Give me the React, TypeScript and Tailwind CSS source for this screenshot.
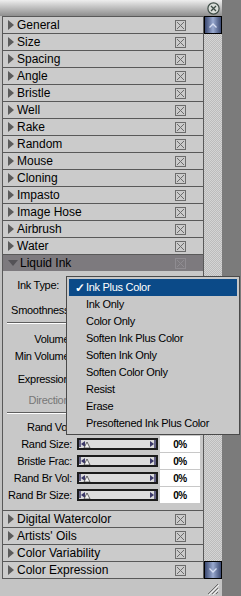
import React from 'react';

const topRows = ['General', 'Size', 'Spacing', 'Angle', 'Bristle', 'Well', 'Rake', 'Random', 'Mouse', 'Cloning', 'Impasto', 'Image Hose', 'Airbrush', 'Water'];
const bottomRows = ['Digital Watercolor', "Artists' Oils", 'Color Variability', 'Color Expression'];
const menuItems = ['Ink Plus Color', 'Ink Only', 'Color Only', 'Soften Ink Plus Color', 'Soften Ink Only', 'Soften Color Only', 'Resist', 'Erase', 'Presoftened Ink Plus Color'];
const sliders = ['Rand Vol:', 'Rand Size:', 'Bristle Frac:', 'Rand Br Vol:', 'Rand Br Size:'];

const CheckBox: React.FC<{ color?: string }> = ({ color = '#6c6c6c' }) => (
  <svg width="11" height="11" viewBox="0 0 11 11" className="shrink-0">
    <rect x="0.5" y="0.5" width="10" height="10" fill="none" stroke={color} />
    <path d="M2 2L9 9M9 2L2 9" stroke={color} strokeWidth="1" />
  </svg>
);

const SectionRow: React.FC<{ label: string }> = ({ label }) => (
  <div className="h-[17px] border-t border-[#595959] bg-[#cbcbcb] flex items-center">
    <svg width="6" height="10" viewBox="0 0 6 10" className="ml-[5px] shrink-0">
      <path d="M0 0L6 5L0 10Z" fill="#5c5c5c" />
    </svg>
    <span className="ml-[3px] flex-1 text-[12px] text-black leading-none">{label}</span>
    <div className="mr-[17px]">
      <CheckBox />
    </div>
  </div>
);

const Slider: React.FC = () => (
  <div className="w-[81px] h-[12px] border-2 border-[#1c1c1c] bg-[#dcdcdc] flex items-center justify-between">
    <svg width="12" height="8" viewBox="0 0 12 8">
      <path d="M1 0V7" stroke="#3b3868" strokeWidth="1.5" />
      <path d="M6 1L2 4L6 7Z" fill="#3b3868" />
      <path d="M8 2L11 8H5Z" fill="#f4f4f4" stroke="#444" strokeWidth="0.8" />
    </svg>
    <svg width="7" height="8" viewBox="0 0 7 8">
      <path d="M1 1L5 4L1 7Z" fill="#3b3868" />
      <path d="M6 0V8" stroke="#3b3868" strokeWidth="1.5" />
    </svg>
  </div>
);

const Label: React.FC<{ text: string; dim?: boolean }> = ({ text, dim }) => (
  <span className={`w-[69px] text-right text-[11px] tracking-[-0.3px] leading-none whitespace-nowrap ${dim ? 'text-[#777]' : 'text-black'}`}>
    {text}
  </span>
);

const ScrollButton: React.FC<{ up?: boolean }> = ({ up }) => (
  <div className="h-[18px] border border-black bg-gradient-to-r from-[#3c4a72] via-[#9aaad0] to-[#3c4a72] flex items-center justify-center">
    <svg width="8" height="5" viewBox="0 0 8 5">
      <path d={up ? 'M0.5 4.5L4 1L7.5 4.5' : 'M0.5 0.5L4 4L7.5 0.5'} fill="none" stroke="#d6def2" strokeWidth="1.3" />
    </svg>
  </div>
);

export default function App() {
  return (
    <div className="relative w-[241px] h-[596px] bg-[#7b7b7b] flex font-['Liberation_Sans',Arial,sans-serif] overflow-hidden">
      <div className="w-[222px] flex flex-col">
        {/* Title bar */}
        <div className="h-[16px] bg-gradient-to-b from-[#eeeeee] to-[#8e8e8e] flex items-center justify-end pr-[2px]">
          <svg width="13" height="13" viewBox="0 0 13 13">
            <circle cx="6.5" cy="6.5" r="5.6" fill="#d9ddd9" stroke="#3e4c46" strokeWidth="1.2" />
            <path d="M4 4L9 9M9 4L4 9" stroke="#3e4c46" strokeWidth="1.3" />
          </svg>
        </div>

        <div className="flex">
          {/* Brush control list */}
          <div className="w-[204px] pl-[2px] bg-[#c2c2c2]">
            <div className="border-l border-r border-b border-[#595959] flex flex-col">
              {topRows.map((r) => (
                <SectionRow key={r} label={r} />
              ))}

              {/* Liquid Ink header */}
              <div className="h-[17px] border-t border-[#595959] bg-[#7d7a7e] flex items-center">
                <svg width="10" height="6" viewBox="0 0 10 6" className="ml-[5px] shrink-0">
                  <path d="M0 0H10L5 6Z" fill="#545256" />
                </svg>
                <span className="ml-[2px] flex-1 text-[12px] text-black leading-none">Liquid Ink</span>
                <div className="mr-[17px]">
                  <CheckBox color="#8f8c91" />
                </div>
              </div>

              {/* Liquid Ink section */}
              <div className="h-[239px] bg-[#c8c8c8] flex flex-col">
                <div className="mt-[6px] h-[17px] flex items-center">
                  <span className="w-[56px] text-right text-[11px] tracking-[-0.3px] leading-none">Ink Type:</span>
                </div>
                <div className="mt-[8px] h-[17px] flex items-center">
                  <Label text="Smoothness:" />
                </div>
                <div className="mt-[3px] mx-[4px] h-[2px] border-t border-[#5e5e5e] border-b border-b-white" />
                <div className="mt-[7px] h-[17px] flex items-center">
                  <Label text="Volume:" />
                </div>
                <div className="h-[17px] flex items-center">
                  <Label text="Min Volume:" />
                </div>
                <div className="mt-[6px] h-[17px] flex items-center">
                  <Label text="Expression:" />
                </div>
                <div className="mt-[4px] h-[17px] flex items-center">
                  <Label text="Direction:" dim />
                </div>
                <div className="mt-[3px] mx-[4px] h-[2px] border-t border-[#5e5e5e] border-b border-b-white" />
                <div className="mt-[5px] flex flex-col gap-[1px]">
                  {sliders.map((s, i) => (
                    <div key={s} className="h-[16px] flex items-center">
                      <Label text={s} />
                      <div className="ml-[5px]">
                        <Slider />
                      </div>
                      <div className="ml-[2px] w-[40px] h-[16px] bg-white flex items-center justify-center text-[10px] font-bold text-black tracking-[-0.5px]">
                        {i === 0 ? '' : '0%'}
                      </div>
                    </div>
                  ))}
                </div>
              </div>

              {bottomRows.map((r) => (
                <SectionRow key={r} label={r} />
              ))}
            </div>
          </div>

          {/* Scrollbar */}
          <div className="w-[18px] flex flex-col">
            <ScrollButton up />
            <div className="flex-1 bg-[image:repeating-conic-gradient(#bcbcbc_0%_25%,#d4d4d4_0%_50%)] bg-[length:2px_2px]" />
            <ScrollButton />
          </div>
        </div>

        {/* Bottom bar */}
        <div className="flex-1 bg-[#c4c4c4] flex items-end justify-end pr-[3px] pb-[1px]">
          <svg width="14" height="14" viewBox="0 0 14 14">
            <path d="M13 3L3 13M13 7L7 13M13 11L11 13" stroke="#6a6a6a" strokeWidth="1" />
            <path d="M14 4L4 14M14 8L8 14" stroke="#f0f0f0" strokeWidth="1" />
          </svg>
        </div>
      </div>

      {/* Ink Type popup menu */}
      <div className="absolute left-[66px] top-[276px] w-[174px] border border-[#4a4a4a] bg-[#c8c8c8] p-[2px] flex flex-col">
        {menuItems.map((m, i) => (
          <div
            key={m}
            className={`h-[17px] flex items-center text-[11px] tracking-[-0.3px] leading-none ${i === 0 ? 'bg-[#0b4a88] text-white' : 'text-black'}`}
          >
            <span className="w-[17px] pl-[6px] text-[12px] font-bold">{i === 0 ? '✓' : ''}</span>
            <span>{m}</span>
          </div>
        ))}
      </div>
    </div>
  );
}
